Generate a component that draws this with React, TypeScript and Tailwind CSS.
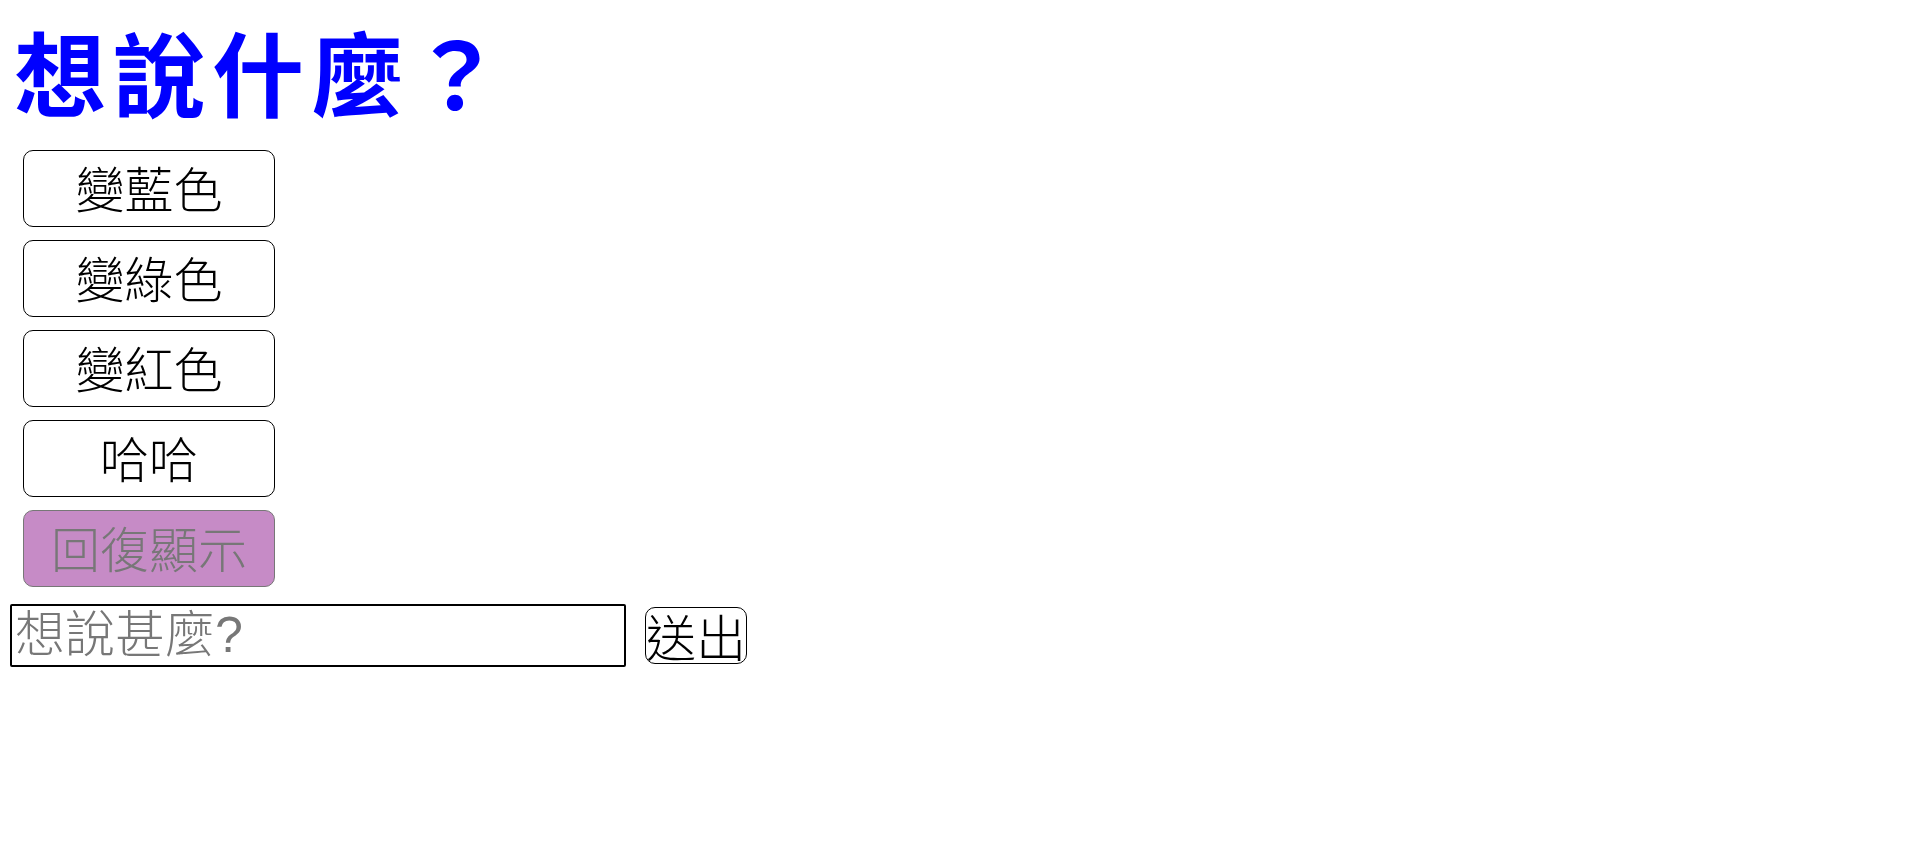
export default function App() {
  const buttons = ["變藍色", "變綠色", "變紅色", "哈哈"];
  return (
    <div className="min-h-screen bg-white p-2 font-['Noto_Sans_CJK_TC',sans-serif]">
      <h1 className="text-[92px] font-bold leading-[120px] text-[#0000ff] mt-[2px] pl-[6px] tracking-[7px]">想說什麼？</h1>
      <div className="flex flex-col gap-[13px] pl-[15px] mt-[20px]">
        {buttons.map((b) => (
          <button
            key={b}
            className="w-[252px] h-[77px] rounded-[10px] border border-black bg-white pb-[5px] text-[49px] font-light leading-none text-black"
          >
            {b}
          </button>
        ))}
        <button className="w-[252px] h-[77px] rounded-[10px] border border-[#777] bg-[#c68bc6] pb-[5px] text-[49px] font-light leading-none text-[#777]">
          回復顯示
        </button>
      </div>
      <div className="flex items-center gap-[19px] pl-[2px] mt-[17px]">
        <input
          placeholder="想說甚麼?"
          className="w-[616px] h-[63px] rounded-[2px] border-2 border-black px-[3px] text-[50px] font-light outline-none placeholder:text-[#777] font-['Liberation_Sans','Noto_Sans_CJK_TC',sans-serif]"
        />
        <button className="w-[102px] h-[57px] rounded-[10px] border border-black bg-white pb-[2px] text-[50px] font-light leading-none text-black">
          送出
        </button>
      </div>
    </div>
  );
}
